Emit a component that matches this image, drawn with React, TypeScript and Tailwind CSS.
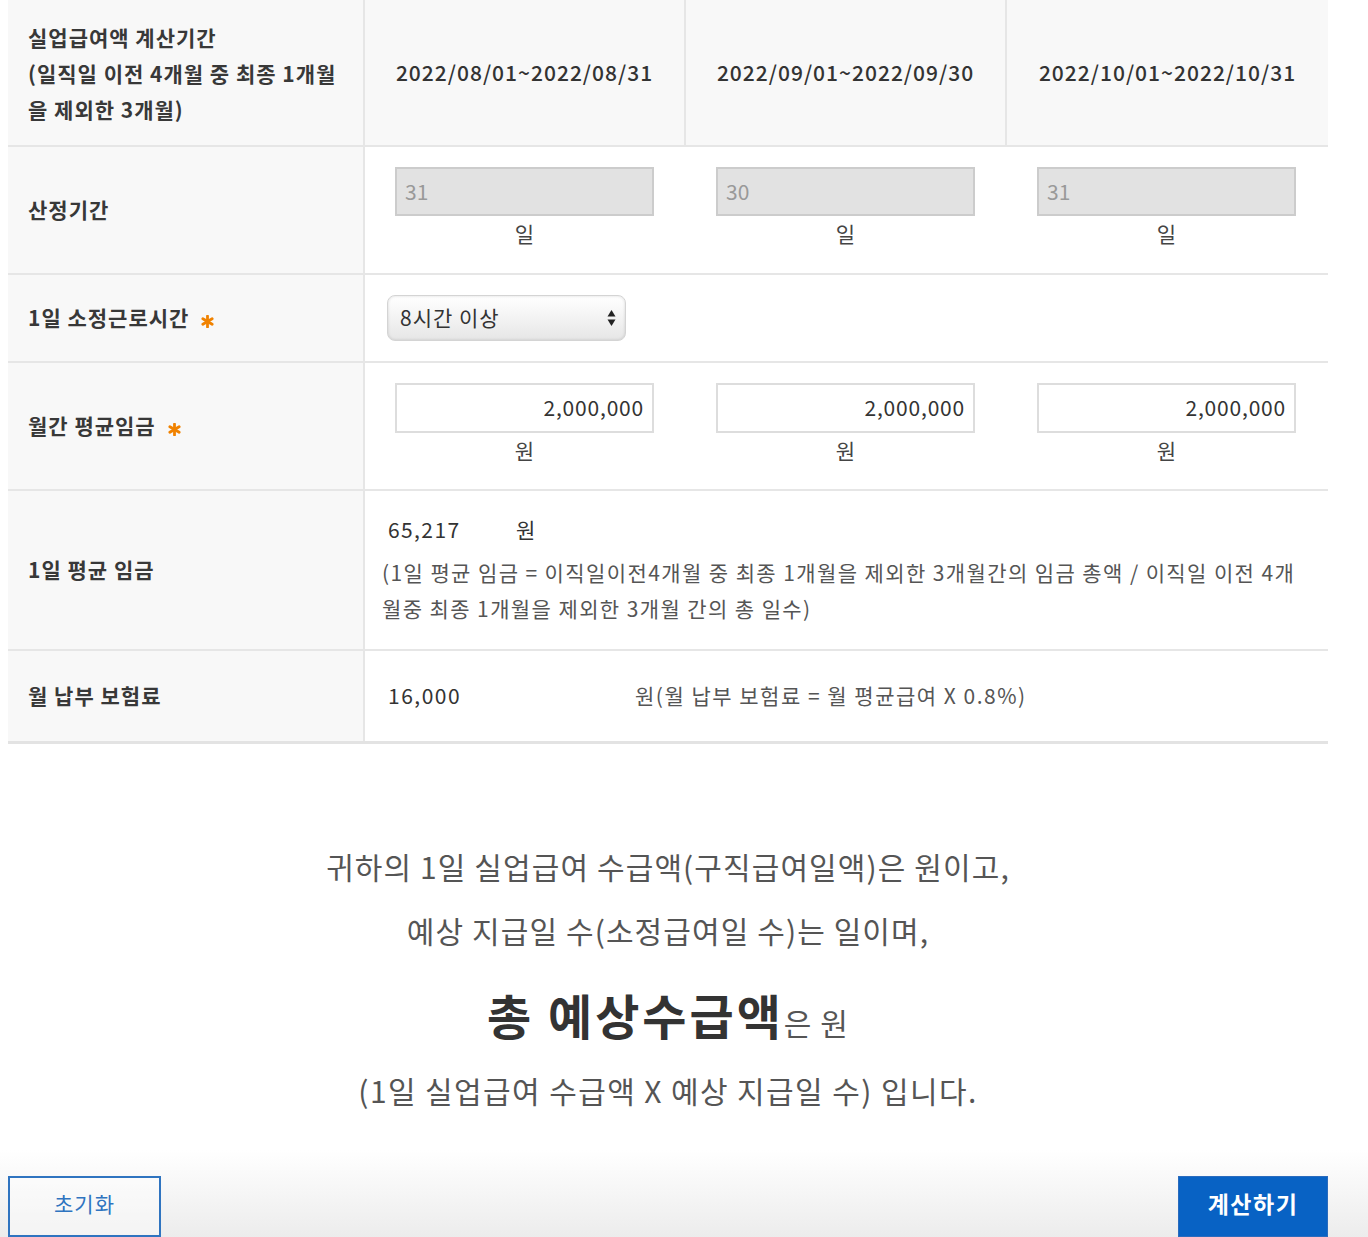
import React from 'react';

const font = { fontFamily: '"Noto Sans CJK KR", "Noto Sans", sans-serif' };

const periods = ['2022/08/01~2022/08/31', '2022/09/01~2022/09/30', '2022/10/01~2022/10/31'];
const days = ['31', '30', '31'];
const wages = ['2,000,000', '2,000,000', '2,000,000'];

// orange required marker
const Star = () => (
  <svg width="13" height="13" viewBox="0 0 12 12" className="ml-3 mt-[6px]">
    <g stroke="#f08200" strokeWidth="2.6" strokeLinecap="round">
      <line x1="6" y1="1" x2="6" y2="11" />
      <line x1="1.7" y1="3.5" x2="10.3" y2="8.5" />
      <line x1="1.7" y1="8.5" x2="10.3" y2="3.5" />
    </g>
  </svg>
);

const Label: React.FC<{ children: React.ReactNode }> = ({ children }) => (
  <div className="w-[357px] shrink-0 bg-[#f8f8f8] border-r-2 border-[#e6e6e6] flex items-center pl-5 text-[21px] font-semibold text-[#383838] tracking-[1px]">
    {children}
  </div>
);

export default function App() {
  return (
    <div className="min-h-[1237px] bg-white text-[#333] pl-2" style={font}>
      <div className="w-[1320px]">
        {/* header */}
        <div className="flex h-[147px] border-b-2 border-[#e6e6e6] bg-[#f8f8f8]">
          <div className="w-[357px] shrink-0 border-r-2 border-[#e6e6e6] flex items-center pl-5 text-[21px] font-semibold text-[#383838] leading-[36px] tracking-[1px]">
            <div>
              실업급여액 계산기간
              <br />
              (일직일 이전 4개월 중 최종 1개월
              <br />
              을 제외한 3개월)
            </div>
          </div>
          {periods.map((p, i) => (
            <div
              key={p}
              className={`w-[321px] shrink-0 flex items-center justify-center text-[21px] font-medium tracking-[1px] ${i < 2 ? 'border-r-2 border-[#e6e6e6]' : ''}`}
            >
              {p}
            </div>
          ))}
        </div>

        {/* 산정기간 */}
        <div className="flex h-[128px] border-b-2 border-[#e6e6e6]">
          <Label>산정기간</Label>
          {days.map((d, i) => (
            <div key={i} className="w-[321px] shrink-0 flex flex-col items-center pt-[20px] pr-[2px]">
              <div className="w-[259px] h-[49px] bg-[#e2e2e2] border-2 border-[#cccccc] flex items-center px-2 text-[21px] text-[#999]">
                {d}
              </div>
              <div className="mt-[2px] text-[21px] text-[#444]">일</div>
            </div>
          ))}
        </div>

        {/* 1일 소정근로시간 */}
        <div className="flex h-[88px] border-b-2 border-[#e6e6e6]">
          <Label>
            1일 소정근로시간 <Star />
          </Label>
          <div className="flex-1 flex items-center pl-[22px]">
            <div className="w-[239px] h-[46px] rounded-lg border border-[#d4d4d4] bg-gradient-to-b from-white via-[#f3f3f3] to-[#e6e6e6] shadow-[inset_0_0_3px_rgba(0,0,0,0.15)] flex items-center justify-between pl-3 pr-[9px] text-[21px] text-[#333] tracking-[1px]">
              <span>8시간 이상</span>
              <svg width="9" height="20" viewBox="0 0 9 20">
                <path d="M4.5 2 L8.5 8.5 L0.5 8.5 Z" fill="#222" />
                <path d="M4.5 18 L8.5 11.5 L0.5 11.5 Z" fill="#222" />
              </svg>
            </div>
          </div>
        </div>

        {/* 월간 평균임금 */}
        <div className="flex h-[128px] border-b-2 border-[#e6e6e6]">
          <Label>
            월간 평균임금 <Star />
          </Label>
          {wages.map((w, i) => (
            <div key={i} className="w-[321px] shrink-0 flex flex-col items-center pt-[20px] pr-[2px]">
              <div className="w-[259px] h-[50px] bg-white border-2 border-[#dddddd] flex items-center justify-end px-2 text-[21px] text-[#333] tracking-[0.8px]">
                {w}
              </div>
              <div className="mt-[2px] text-[21px] text-[#444]">원</div>
            </div>
          ))}
        </div>

        {/* 1일 평균 임금 */}
        <div className="flex h-[160px] border-b-2 border-[#e6e6e6]">
          <Label>1일 평균 임금</Label>
          <div className="flex-1 flex flex-col justify-center pl-[17px] text-[21px] text-[#444] tracking-[1.4px] whitespace-nowrap">
            <div className="flex pl-[6px] mb-[8px] text-[#333]">
              <span className="w-[128px]">65,217</span>
              <span>원</span>
            </div>
            <div className="leading-[36px] text-[#555]">
              <div>(1일 평균 임금 = 이직일이전4개월 중 최종 1개월을 제외한 3개월간의 임금 총액 / 이직일 이전 4개</div>
              <div>월중 최종 1개월을 제외한 3개월 간의 총 일수)</div>
            </div>
          </div>
        </div>

        {/* 월 납부 보험료 */}
        <div className="flex h-[93px] border-b-[3px] border-[#e3e3e3]">
          <Label>월 납부 보험료</Label>
          <div className="flex-1 flex items-center pl-[23px] text-[21px] text-[#333] tracking-[1.5px]">
            <span className="w-[247px]">16,000</span>
            <span className="text-[#555]">원(월 납부 보험료 = 월 평균급여 X 0.8%)</span>
          </div>
        </div>

        {/* result text */}
        <div className="flex flex-col items-center pt-[100px] text-[#555]">
          <p className="text-[30px] leading-[44px] tracking-[1.1px]">귀하의 1일 실업급여 수급액(구직급여일액)은 원이고,</p>
          <p className="mt-[20px] text-[30px] leading-[44px] tracking-[1.1px]">예상 지급일 수(소정급여일 수)는 일이며,</p>
          <p className="mt-[30px] leading-[64px]">
            <span className="text-[48px] font-bold text-[#333] tracking-[3px]">총 예상수급액</span>
            <span className="text-[30px] tracking-[1.1px]">은 원</span>
          </p>
          <p className="mt-[8px] text-[30px] leading-[44px] tracking-[1.4px]">(1일 실업급여 수급액 X 예상 지급일 수) 입니다.</p>
        </div>
      </div>

      {/* buttons */}
      <div className="mt-[38px] -ml-2 pl-2 w-[1368px] h-[88px] bg-gradient-to-b from-white to-[#ececec] pt-[26px]">
        <div className="w-[1320px] flex justify-between">
          <button className="w-[153px] h-[61px] pb-[6px] border-2 border-[#2f74c0] bg-white/40 text-[21px] text-[#2f74c0] tracking-[1px]">
            초기화
          </button>
          <button className="w-[150px] h-[61px] pb-[6px] border border-[#2a6bbd] bg-[#0862c4] text-[23px] font-bold text-white tracking-[1.5px]">
            계산하기
          </button>
        </div>
      </div>
    </div>
  );
}
